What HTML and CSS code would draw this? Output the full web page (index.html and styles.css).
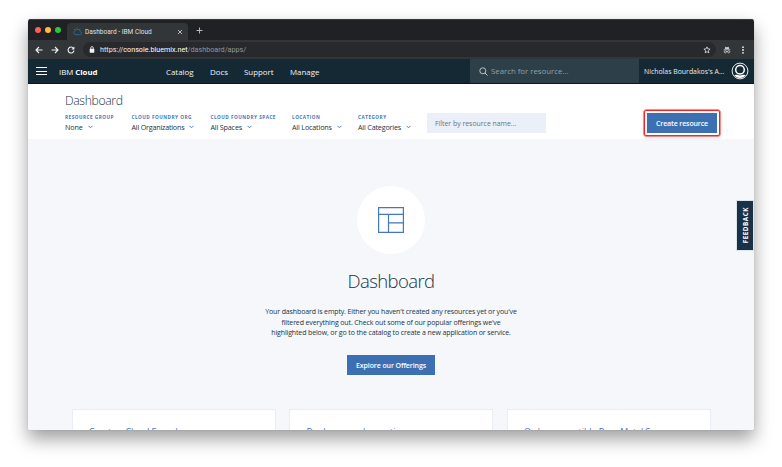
FILE: index.html
```html
<!DOCTYPE html>
<html lang="en">
<head>
<meta charset="utf-8">
<title>Dashboard - IBM Cloud</title>
<link rel="stylesheet" href="styles.css">
</head>
<body>
<div class="window">
  <div class="tabstrip">
    <i class="light red"></i><i class="light yellow"></i><i class="light green"></i>
    <div class="tab">
      <svg class="favicon" viewBox="0 0 16 16"><path d="M4 13.500h8a3 3 0 0 0 1-5.800A5 5 0 0 0 4 6.500a3.600 3.600 0 0 0 0 7z" fill="none" stroke="#256f96" stroke-width="1.600"/><path d="M2 4l2 1.500M7 1v2M13 3l-1.500 1.500" stroke="#2b8f9b" stroke-width="1.300"/></svg>
      <span class="tab-title">Dashboard - IBM Cloud</span>
      <svg class="close" viewBox="0 0 6 6"><path d="M1 1l4 4M5 1L1 5" stroke="#c3c6c9" stroke-width=".9"/></svg>
    </div>
    <svg class="plus" viewBox="0 0 7 7"><path d="M3.500 .5v6M.5 3.500h6" stroke="#b6b9bb" stroke-width="1"/></svg>
  </div>
  <div class="toolbar">
    <svg class="nav-icon" viewBox="0 0 8 8"><path d="M7.500 4H1M4 1L1 4l3 3" fill="none" stroke="#f1f3f4" stroke-width="1.100"/></svg>
    <svg class="nav-icon" viewBox="0 0 8 8"><path d="M.5 4H7M4 1l3 3-3 3" fill="none" stroke="#f1f3f4" stroke-width="1.100"/></svg>
    <svg class="nav-icon" viewBox="0 0 8 8"><path d="M6.500 2.200A3 3 0 1 0 7 4.700" fill="none" stroke="#f1f3f4" stroke-width="1.100"/><path d="M7.400 .5v3h-3z" fill="#f1f3f4"/></svg>
    <div class="address">
      <svg class="lock" viewBox="0 0 6 7"><rect x=".7" y="2.700" width="4.600" height="4" rx=".4" fill="#f1f3f4"/><path d="M1.700 3V1.900a1.300 1.300 0 0 1 2.600 0V3" fill="none" stroke="#f1f3f4" stroke-width=".8"/></svg>
      <span class="url">https://<b>console.bluemix.net</b><em>/dashboard/apps/</em></span>
      <svg class="star" viewBox="0 0 8 8"><path d="M4 .9l.9 2 2.200.2-1.700 1.500.5 2.200L4 5.700 2.100 6.800l.5-2.200L.9 3.100l2.200-.2z" fill="none" stroke="#e4e6e8" stroke-width=".8"/></svg>
    </div>
    <svg class="incognito" viewBox="0 0 8 8"><path d="M2.300 .8L4 1.200 5.700 .8l.6 2.400H1.700z" fill="#c9cccf"/><path d="M.7 3.800h6.600" stroke="#c9cccf" stroke-width=".8"/><g fill="none" stroke="#c9cccf" stroke-width=".8"><circle cx="2.300" cy="5.800" r="1.100"/><circle cx="5.700" cy="5.800" r="1.100"/><path d="M3.300 5.500h1.400"/></g></svg>
    <svg class="kebab" viewBox="0 0 4 8"><g fill="#f1f3f4"><circle cx="2" cy="1.200" r=".9"/><circle cx="2" cy="4" r=".9"/><circle cx="2" cy="6.800" r=".9"/></g></svg>
  </div>
  <header class="topnav">
    <div class="burger"><i></i><i></i><i></i></div>
    <div class="brand">IBM <b>Cloud</b></div>
    <nav class="links"><a class="l1">Catalog</a><a class="l2">Docs</a><a class="l3">Support</a><a class="l4">Manage</a></nav>
    <div class="search">
      <svg viewBox="0 0 9 9"><circle cx="3.800" cy="3.800" r="3" fill="none" stroke="#c7d0d6" stroke-width=".9"/><path d="M6 6l2.500 2.500" stroke="#c7d0d6" stroke-width="1"/></svg>
      <span>Search for resource...</span>
    </div>
    <span class="account">Nicholas Bourdakos's A...</span>
    <svg class="avatar" viewBox="0 0 18 18"><circle cx="9" cy="9" r="7.900" fill="none" stroke="#fff" stroke-width=".9"/><circle cx="9" cy="7.700" r="4.300" fill="none" stroke="#fff" stroke-width="1.500"/><path d="M3.200 13.100q2.500-.7 3.300-.3q2.500 1.200 5 0q.8-.4 3.300.3A7.200 7.200 0 0 1 3.200 13.100z" fill="#fff"/></svg>
  </header>
  <section class="filters">
    <h1>Dashboard</h1>
    <div class="filter-row">
      <div class="filter f1"><label>RESOURCE GROUP</label><p><span>None</span><svg viewBox="0 0 5 4"><path d="M.5 .8l2 2 2-2" fill="none" stroke="#4a7fc8" stroke-width="1"/></svg></p></div>
      <div class="filter f2"><label>CLOUD FOUNDRY ORG</label><p><span>All Organizations</span><svg viewBox="0 0 5 4"><path d="M.5 .8l2 2 2-2" fill="none" stroke="#4a7fc8" stroke-width="1"/></svg></p></div>
      <div class="filter f3"><label>CLOUD FOUNDRY SPACE</label><p><span>All Spaces</span><svg viewBox="0 0 5 4"><path d="M.5 .8l2 2 2-2" fill="none" stroke="#4a7fc8" stroke-width="1"/></svg></p></div>
      <div class="filter f4"><label>LOCATION</label><p><span>All Locations</span><svg viewBox="0 0 5 4"><path d="M.5 .8l2 2 2-2" fill="none" stroke="#4a7fc8" stroke-width="1"/></svg></p></div>
      <div class="filter f5"><label>CATEGORY</label><p><span>All Categories</span><svg viewBox="0 0 5 4"><path d="M.5 .8l2 2 2-2" fill="none" stroke="#4a7fc8" stroke-width="1"/></svg></p></div>
      <div class="name-filter"><span>Filter by resource name...</span></div>
      <div class="highlight"><div class="button create"><span>Create resource</span></div></div>
    </div>
  </section>
  <main class="content">
    <div class="disc"><svg viewBox="0 0 26 26"><path d="M.6 .6h24.800v24.800H.6zM.6 7.300h24.800M10.500 7.300v18.100M10.500 15.800h14.900" fill="none" stroke="#4178be" stroke-width="1.200"/></svg></div>
    <h2>Dashboard</h2>
    <div class="blurb"><p>Your dashboard is empty. Either you haven't created any resources yet or you've</p><p>filtered everything out. Check out some of our popular offerings we've</p><p>highlighted below, or go to the catalog to create a new application or service.</p></div>
    <div class="button explore"><span>Explore our Offerings</span></div>
    <div class="cards">
      <div class="card"><span>Create a Cloud Foundry</span></div>
      <div class="card"><span>Deploy serverless actions</span></div>
      <div class="card"><span>Order compatible Bare Metal Servers</span></div>
    </div>
  </main>
  <div class="feedback"><span>FEEDBACK</span></div>
</div>
</body>
</html>
```
FILE: styles.css
```css
* { box-sizing: border-box; margin: 0; padding: 0; }
body { width: 782px; height: 467px; padding: 19px 28px; background: #fff; overflow: hidden; font-family: "Open Sans", "Noto Sans", sans-serif; color: #20343f; }
span, a, h1, h2, label, p { white-space: nowrap; }
svg { display: block; flex: none; }
.window { position: relative; width: 726px; height: 411px; display: flex; flex-direction: column; overflow: hidden; border-radius: 3px 3px 1px 1px; background: #f5f7fb; box-shadow: 0 9px 18px rgba(0,0,0,.38), 0 0 1px rgba(0,0,0,.3); }

.tabstrip { height: 21px; flex: none; background: #202124; display: flex; align-items: center; padding-left: 7px; border-top: 1px solid #3b3c3e; }
.light { width: 6px; height: 6px; border-radius: 50%; margin-right: 4px; }
.red { background: #fc605c; }
.yellow { background: #fdbc40; }
.green { background: #27c840; }
.tab { align-self: flex-end; width: 121px; height: 17px; margin-left: 2px; padding: 0 5px 0 6px; display: flex; align-items: center; background: #323639; border-radius: 4px 4px 0 0; }
.favicon { width: 9px; height: 9px; }
.tab-title { margin-left: 3px; font: 6.500px Roboto, sans-serif; color: #dfe1e3; letter-spacing: .02px; }
.close { width: 6px; height: 6px; margin-left: auto; }
.plus { width: 7px; height: 7px; margin-left: 8px; }

.toolbar { height: 19px; flex: none; background: #323639; display: flex; align-items: center; padding-left: 7px; }
.nav-icon { width: 8px; height: 8px; margin-right: 8px; }
.address { flex: 1; height: 15px; display: flex; align-items: center; margin-right: 7px; background: #27292c; border-radius: 8px; padding: 0 5px; }
.lock { width: 6px; height: 7px; margin-left: 1px; }
.url { margin-left: 5px; font: 7.200px Roboto, sans-serif; color: #e8eaed; }
.url b { font-weight: 400; color: #fff; }
.url em { font-style: normal; color: #92979b; }
.star { width: 8px; height: 8px; margin-left: auto; }
.incognito { width: 8px; height: 8px; margin-right: 10px; }
.kebab { width: 4px; height: 8px; margin-right: 9.500px; }

.topnav { height: 25px; flex: none; background: #152935; display: flex; align-items: center; padding-left: 8px; border-bottom: 1px solid #0b1820; }
.burger { width: 11px; height: 8px; display: flex; flex-direction: column; justify-content: space-between; }
.burger i { height: 1px; background: #fff; }
.brand { width: 107px; margin-left: 12px; padding-top: 1px; font-size: 7.800px; color: #fff; white-space: nowrap; }
.links { display: flex; width: 304px; padding-top: 1px; font-size: 7.900px; color: #f0f3f5; }
.l1 { width: 44px; }
.l2 { width: 34px; }
.l3 { width: 46px; }
.search { width: 169px; height: 24px; display: flex; align-items: center; padding-left: 9px; background: #2d3f49; color: #93a1aa; font-size: 7.800px; }
.search svg { width: 9px; height: 9px; margin-right: 3px; }
.account { margin-left: 5px; width: 82px; font-size: 6.900px; color: #e7ecef; }
.avatar { width: 18px; height: 18px; margin-left: 5.400px; }

.filters { height: 55px; flex: none; background: #fff; padding: 9px 0 0 37px; }
h1 { height: 14px; line-height: 15px; font-size: 12.200px; font-weight: 300; letter-spacing: -.35px; }
.filter-row { display: flex; }
.filter { padding-top: 7px; }
.f1 { width: 66.500px; }
.f2 { width: 79px; }
.f3 { width: 81.500px; }
.f4 { width: 66px; }
.f5 { width: 69px; }
.filter label { display: block; height: 7px; line-height: 7px; font-size: 4.700px; font-weight: 700; color: #4178be; letter-spacing: .48px; }
.filter p { display: flex; align-items: center; height: 12px; font-size: 7.200px; letter-spacing: -.18px; }
.filter p svg { width: 5px; height: 4px; margin-left: 5px; }
.f1 p { letter-spacing: -.1px; }
.f2 p { letter-spacing: -.22px; }
.name-filter { width: 119px; height: 20px; margin-top: 6px; padding-left: 8px; display: flex; align-items: center; background: #ebf0f8; font-size: 6.900px; color: #65737d; }
.highlight { width: 76px; height: 26px; margin: 3px 0 0 98px; padding: 2px; border: 1px solid #f52527; border-radius: 2px; box-shadow: 0 0 0 .5px #f52527, 0 1px 4px rgba(0,0,0,.15); }
.button { display: flex; align-items: center; justify-content: center; background: #3d70b2; color: #fff; font-size: 7px; font-weight: 600; }
.create { width: 70px; height: 20px; letter-spacing: -.12px; }

.content { flex: 1; min-height: 0; display: flex; flex-direction: column; align-items: center; }
.disc { width: 68px; height: 68px; flex: none; margin-top: 47px; border-radius: 50%; background: #fff; display: flex; align-items: center; justify-content: center; }
.disc svg { width: 26px; height: 26px; }
h2 { height: 26px; flex: none; line-height: 26px; margin-top: 14px; font-size: 18.500px; font-weight: 300; letter-spacing: -.6px; }
.blurb { flex: none; margin-top: 13px; font-size: 7px; letter-spacing: -.13px; text-align: center; }
.blurb p { height: 10.700px; line-height: 10.700px; }
.explore { width: 88px; height: 20px; flex: none; margin-top: 16.300px; letter-spacing: -.1px; }
.cards { display: flex; flex: none; gap: 15.500px; margin-top: 34.600px; width: 637px; }
.card { width: 202px; height: 60px; flex: none; padding: 16px 0 0 16.500px; background: #fff; box-shadow: 0 0 0 1px rgba(40,60,90,.05); font-size: 8.800px; line-height: 12px; color: #4178be; }

.feedback { position: absolute; right: 1px; top: 182px; width: 16px; height: 49px; background: #183247; box-shadow: 0 0 0 1px #dfe4ea; display: flex; align-items: center; justify-content: center; color: #fff; font-size: 6.300px; font-weight: 700; }
.feedback span { writing-mode: vertical-rl; transform: rotate(180deg); letter-spacing: .55px; }
```
